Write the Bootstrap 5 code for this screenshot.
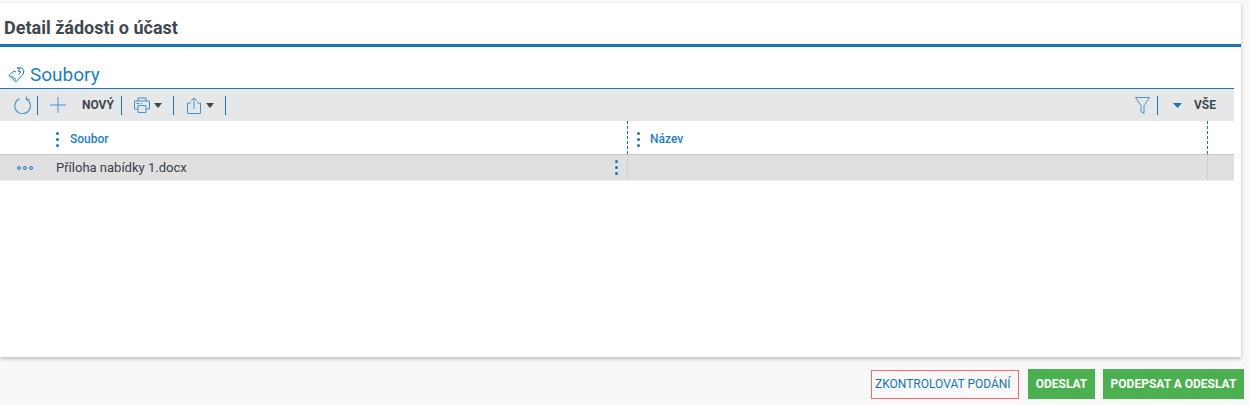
<!DOCTYPE html>
<html lang="cs">
<head>
<meta charset="utf-8">
<title>Detail žádosti o účast</title>
<link href="https://cdn.jsdelivr.net/npm/bootstrap@5.3.0/dist/css/bootstrap.min.css" rel="stylesheet">
<style>
html,body{height:405px;overflow:hidden}
body{font-family:Roboto,sans-serif;background:#f8f8f8;color:#3a4149}
.sheet{height:354px;margin-top:3px;width:1241px;background:#fff;box-shadow:0 2px 4px rgba(0,0,0,.24)}
.pg-title{height:41px;font-size:18px;font-weight:700;line-height:22px;padding:14px 0 0 4px;color:#3f4750;margin:0}
.pg-rule{height:3px;background:#1a75b5}
.wrap{width:1234px}
.sec-title{height:42px;padding:15px 0 0 8px;border-bottom:1px solid #1a75b5;font-size:19px;line-height:22px;color:#1f7fc1;gap:5px;margin:0;font-weight:400}
.tools{height:32px;background:#e5e7e9;padding-left:14px;padding-right:18px}
.tools svg{display:block;flex:none}
.vsep{width:1px;height:19px;background:#1a75b5;flex:none}
.tlabel{font-size:12px;font-weight:700;color:#3f4750;line-height:14px}
.grid-head,.grid-row{display:grid;grid-template-columns:628px 580px 26px}
.grid-head{height:34px;border-bottom:1px solid #c6c6c6}
.grid-row{height:26px;background:#e0e0e0;border-bottom:1px solid #f0f0f0;font-size:13px;color:#3a4149}
.hcell{display:flex;align-items:center;font-size:12px;font-weight:500;color:#1f7fc1;border-right:1px dashed #1a75b5;padding-top:3px}
.hcell:last-child{border:0}
.rcell{display:flex;align-items:center;border-right:1px dotted #c0c0c0}
.rcell:last-child{border:0}
.kebab{display:flex;flex-direction:column;gap:3px;flex:none}
.kebab i{width:3px;height:3px;border-radius:50%;background:#1a75b5;display:block}
.rings{display:flex;gap:2px;width:40px;padding-left:17px;flex:none}
.rings i{width:4px;height:4px;border-radius:50%;border:1px solid #1a75b5;display:block}
.foot{height:47px;padding:12px 5px 0 0;gap:9px}
.btn-check-sub,.btn-go{font-size:12px;line-height:14px;height:30px;border-radius:0;padding:0;display:flex;align-items:center;justify-content:center}
.btn-check-sub{width:148px;height:29px;margin-top:.5px;border:1px solid #f4696f;color:#1a75b5;background:transparent;font-weight:400;justify-content:flex-start;padding-left:3px}
.btn-go{background:#4caf50;border:0;color:#fff;font-weight:700}
.w-a{width:67px}.w-b{width:141px}
</style>
</head>
<body>
<div class="sheet">
  <h1 class="pg-title">Detail žádosti o účast</h1>
  <div class="pg-rule"></div>
  <div class="wrap">
    <h2 class="sec-title d-flex align-items-center">
      <svg width="17" height="16" viewBox="0 0 17 16" fill="none" stroke="#1f7fc1" stroke-width="1"><path d="M.8 8.500L6 4l2 1M9 .8l5 .2 1.800 2.500-.5 3.500L8 14.800.8 8.500"/><path d="M3 8.800l5 3.700"/><path d="M9 .8l3 1.700-2 1.500 3 1-2.500 2.500"/></svg>
      <span>Soubory</span>
    </h2>
    <div class="tools d-flex align-items-center">
      <svg width="17" height="18" viewBox="0 0 17 18" fill="none" stroke="#4a93cc" stroke-width="1.100"><path d="M5.500 2.800A7.800 7.800 0 1 0 11.500 2.700"/><path d="M12.500 .5v3.200h3.200" stroke-width="1"/></svg>
      <span class="vsep" style="margin-left:6px"></span>
      <svg style="margin-left:12px" width="16" height="16" viewBox="0 0 16 16" stroke="#4a93cc" stroke-width="1"><path d="M8 0v16M0 8h16"/></svg>
      <span class="tlabel" style="margin-left:16px">NOVÝ</span>
      <span class="vsep" style="margin-left:7px"></span>
      <svg style="margin-left:12px" width="16" height="16" viewBox="0 0 16 16" fill="none" stroke="#4a93cc" stroke-width="1"><path d="M4 4V1h8v3M4 12H.5V4h15v8H12"/><path d="M4 8.500h8v7H4zM2.500 6.500h3M7 6.500h1"/></svg>
      <svg style="margin-left:4px" width="8" height="5" viewBox="0 0 8 5"><path d="M0 0h8L4 5z" fill="#3f4750"/></svg>
      <span class="vsep" style="margin-left:11px"></span>
      <svg style="margin-left:13px" width="14" height="17" viewBox="0 0 14 17" fill="none" stroke="#4a93cc" stroke-width="1"><path d="M4 6H.5v10.500h13V6H10"/><path d="M7 12V1M4 4l3-3 3 3"/></svg>
      <svg style="margin-left:5px" width="8" height="5" viewBox="0 0 8 5"><path d="M0 0h8L4 5z" fill="#3f4750"/></svg>
      <span class="vsep" style="margin-left:11px"></span>
      <svg class="ms-auto" width="15" height="17" viewBox="0 0 15 17" fill="none" stroke="#4a93cc" stroke-width="1"><path d="M.5 .5h14L9 8.500v8L6 14.500v-6z"/></svg>
      <span class="vsep" style="margin-left:7px"></span>
      <svg style="margin-left:15px" width="9" height="5" viewBox="0 0 9 5"><path d="M0 0h9L4.500 5z" fill="#1a75b5"/></svg>
      <span class="tlabel" style="margin-left:12px">VŠE</span>
    </div>
    <div class="grid-head">
      <div class="hcell"><span class="kebab" style="margin-left:56px"><i></i><i></i><i></i></span><span style="margin-left:11px">Soubor</span></div>
      <div class="hcell"><span class="kebab" style="margin-left:9px"><i></i><i></i><i></i></span><span style="margin-left:10px">Název</span></div>
      <div class="hcell"></div>
    </div>
    <div class="grid-row">
      <div class="rcell"><span class="rings"><i></i><i></i><i></i></span><span style="margin-left:16px">Příloha nabídky 1.docx</span><span class="kebab ms-auto" style="margin-right:9px"><i></i><i></i><i></i></span></div>
      <div class="rcell"></div>
      <div class="rcell"></div>
    </div>
  </div>
</div>
<div class="foot d-flex justify-content-end align-items-start">
  <button type="button" class="btn btn-check-sub">ZKONTROLOVAT PODÁNÍ</button>
  <button type="button" class="btn btn-go w-a">ODESLAT</button>
  <button type="button" class="btn btn-go w-b" style="margin-left:-1px">PODEPSAT A ODESLAT</button>
</div>
</body>
</html>
